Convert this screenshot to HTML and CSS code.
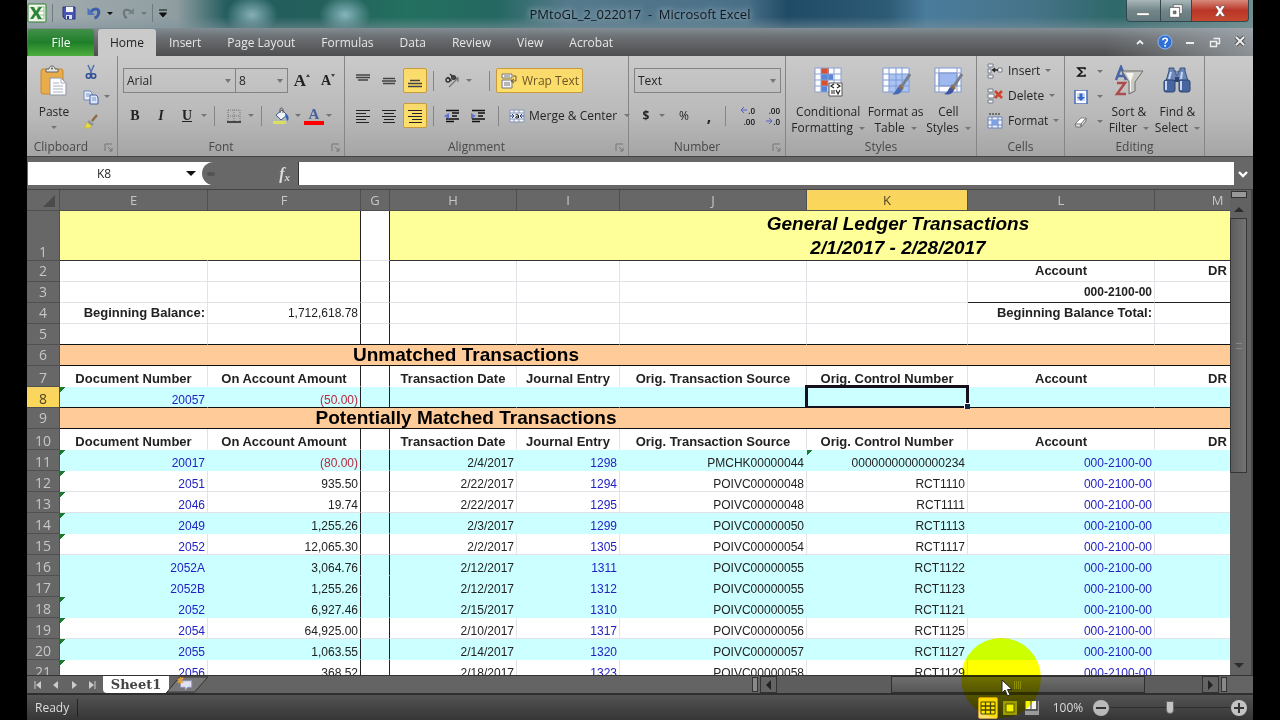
FILE: index.html
```
<!DOCTYPE html>
<html lang="en">
<head>
<meta charset="utf-8">
<title>PMtoGL_2_022017 - Microsoft Excel</title>
<link rel="stylesheet" href="styles.css">
</head>
<body>
<div class="window">
  <header class="titlebar">
    <div class="quick">
      <svg class="i20" viewBox="0 0 20 20"><rect x="1" y="1" width="18" height="18" rx="1" fill="#eef6ea" stroke="#2c7d32"/><rect x="11" y="4" width="6" height="12" fill="#fff" stroke="#8fbf8b"/><path d="M11 8h6M11 12h6" stroke="#8fbf8b"/><path d="M3 4h4l2 4 3-4h3l-4 6 4 6h-4l-2-4-3 4H3l4-6z" fill="#2d8434"/></svg>
      <span class="qsep"></span>
      <button aria-label="Save" class="save"><svg class="i16" viewBox="0 0 16 16"><path d="M2 2h12v12H4l-2-2z" fill="#4a55b5" stroke="#2b347e"/><path d="M5 2h7v5H5z" fill="#f3f5fb"/><path d="M5 10h6v4H5z" fill="#dfe3f4"/><path d="M6 11h2v3H6z" fill="#2b347e"/></svg></button>
      <button aria-label="Undo"><svg class="i16" viewBox="0 0 16 16"><path d="M5 6.500C9 2 14 4 12.500 9c-.5 2-2 3.500-4 4" fill="none" stroke="#3f5fa6" stroke-width="3"/><path d="M1.500 2.500V10H9z" fill="#4f74be"/></svg></button>
      <i class="caret dark"></i>
      <button aria-label="Redo" class="redo"><svg class="i16" viewBox="0 0 16 16"><path d="M11 6.500C7 3 3 5 4 9c.4 2 1 3.500 3 4" fill="none" stroke="#68757b" stroke-width="2"/><path d="M14 3v6H8z" fill="#74828a"/></svg></button>
      <i class="caret"></i>
      <span class="qsep"></span>
      <button aria-label="Customize"><svg class="i10" viewBox="0 0 10 10"><path d="M1 2h8M1.500 5h7L5 9z" stroke="#111" fill="#111"/></svg></button>
    </div>
    <h1>PMtoGL_2_022017 &nbsp;-&nbsp; Microsoft Excel</h1>
    <div class="winbtns">
      <button aria-label="Minimize"><svg viewBox="0 0 20 20"><path d="M3 12h14v3H3z" fill="#fff" stroke="#555" stroke-width=".6"/></svg></button>
      <button aria-label="Restore"><svg viewBox="0 0 20 20"><path d="M7 3h10v10h-3V6H7z" fill="#fff" stroke="#444" stroke-width=".7"/><path d="M3 6h11v11H3zM7 10v3h3v-3z" fill="#fff" fill-rule="evenodd" stroke="#444" stroke-width=".7"/></svg></button>
      <button class="close" aria-label="Close"><svg viewBox="0 0 20 20"><path d="M4 4h4l2 3 2-3h4l-4 6 4 6h-4l-2-3-2 3H4l4-6z" fill="#fff" stroke="#703030" stroke-width=".7"/></svg></button>
    </div>
  </header>

  <nav class="tabs">
    <button class="file">File</button>
    <button class="tab active">Home</button>
    <button class="tab">Insert</button>
    <button class="tab">Page Layout</button>
    <button class="tab">Formulas</button>
    <button class="tab">Data</button>
    <button class="tab">Review</button>
    <button class="tab">View</button>
    <button class="tab">Acrobat</button>
    <div class="tabtools">
      <button aria-label="Collapse ribbon"><svg class="i16" viewBox="0 0 16 16"><path d="M5 10l3-3 3 3" fill="none" stroke="#eee" stroke-width="1.800"/></svg></button>
      <button aria-label="Help"><svg class="i16" viewBox="0 0 16 16"><circle cx="8" cy="8" r="7" fill="#2f6fd6" stroke="#8fb7f0"/><path d="M5.800 6.200C6 3.500 10.500 3.600 10.300 6.200 10.200 7.600 8.200 7.800 8.100 9.600" fill="none" stroke="#fff" stroke-width="1.600"/><circle cx="8.100" cy="11.800" r="1" fill="#fff"/></svg></button>
      <button aria-label="Minimize workbook"><svg class="i16" viewBox="0 0 16 16"><path d="M4 8h8v2H4z" fill="#eee"/></svg></button>
      <button aria-label="Restore workbook"><svg class="i16" viewBox="0 0 16 16"><path d="M6.500 4.500h6v5H10M3.500 7.500h6v5h-6z" fill="none" stroke="#eee" stroke-width="1.400"/></svg></button>
      <button aria-label="Close workbook"><svg class="i16" viewBox="0 0 16 16"><path d="M4 3l8 8M12 3l-8 8" stroke="#555" stroke-width="4"/><path d="M4 3l8 8M12 3l-8 8" stroke="#eee" stroke-width="2"/></svg></button>
    </div>
  </nav>

  <section class="ribbon">
    <div class="group clipboard">
      <div class="body">
        <button class="big"><svg viewBox="0 0 30 32"><rect x="2" y="4" width="22" height="25" rx="2" fill="#e9ac4a" stroke="#c58a30"/><path d="M7 7V4h3c0-4 6-4 6 0h3v3z" fill="#e6e6e6" stroke="#666"/><circle cx="13" cy="3.500" r="1" fill="#555"/><path d="M11 13h11l5 5v12H11z" fill="#fdfdfd" stroke="#8d93a0"/><path d="M22 13v5h5M14 18h6M14 21h10M14 24h10M14 27h10" stroke="#a9b2c4" fill="none"/></svg><span>Paste</span><i class="caret"></i></button>
        <div class="stack">
          <button aria-label="Cut"><svg class="i16" viewBox="0 0 16 16"><path d="M5 1l4 9M11 1L7 10" stroke="#5471ae" stroke-width="1.500"/><circle cx="5.500" cy="12" r="2.200" fill="none" stroke="#2f4f97" stroke-width="1.600"/><circle cx="10.500" cy="12" r="2.200" fill="none" stroke="#2f4f97" stroke-width="1.600"/></svg></button>
          <button aria-label="Copy"><svg class="i16" viewBox="0 0 16 16"><path d="M1 2h6l2 2v7H1z" fill="#e9effb" stroke="#6d88bd"/><path d="M7 6h6l2 2v7H7z" fill="#dce6fa" stroke="#45639f"/><path d="M3 5h4M3 7h4M9 9h4M9 11h4" stroke="#7b93c5"/></svg><i class="caret"></i></button>
          <button aria-label="Format painter"><svg class="i16" viewBox="0 0 16 16"><path d="M14 1l-5 6" stroke="#8c6c48" stroke-width="2.500"/><path d="M6 6l5 4-2 2-5-3z" fill="#8b93a6"/><path d="M4 8l5 4c-2 2-5 3-8 1 2-1 2-3 3-5z" fill="#e6da45" stroke="#b9a733" stroke-width=".6"/></svg></button>
        </div>
      </div>
      <div class="label">Clipboard<svg class="launch" viewBox="0 0 9 9"><path d="M1 8V1h7M4 4l4 4M8 5v3H5" fill="none" stroke="#777"/></svg></div>
    </div>

    <div class="group font">
      <div class="rows">
        <div class="row">
          <select class="fname" aria-label="Font"><option>Arial</option></select><select class="fsize" aria-label="Font size"><option>8</option></select>
          <button class="tb serif lg grow" aria-label="Increase font size">A<i class="mark up"></i></button>
          <button class="tb serif" aria-label="Decrease font size">A<i class="mark"></i></button>
        </div>
        <div class="row">
          <button class="tb serif"><b>B</b></button><button class="tb serif"><em>I</em></button><button class="tb serif"><u>U</u></button><i class="caret"></i>
          <span class="sep"></span>
          <button class="tb" aria-label="Borders"><svg class="i16" viewBox="0 0 16 16"><path d="M2 2h12M2 8h12M2 2v12M8 2v12M14 2v12" stroke="#777" stroke-dasharray="1 1"/><path d="M1 14h14" stroke="#222" stroke-width="1.500"/></svg></button><i class="caret"></i>
          <span class="sep"></span>
          <button class="tb" aria-label="Fill color"><svg class="i18" viewBox="0 0 18 18"><path d="M4 8l6-5 5 5-6 5z" fill="#eef3fb" stroke="#405b8c"/><path d="M8 6V2.500c0-2 3-2 3 0V6" fill="none" stroke="#555"/><path d="M13 7c4 0 4 4 3 7-2-1-2-4-3-7z" fill="#2f65b8"/><path d="M1 14h13v3H1z" fill="#d9e05c"/></svg></button><i class="caret"></i>
          <button class="tb fontcolor" aria-label="Font color">A</button><i class="caret"></i>
        </div>
      </div>
      <div class="label">Font<svg class="launch" viewBox="0 0 9 9"><path d="M1 8V1h7M4 4l4 4M8 5v3H5" fill="none" stroke="#777"/></svg></div>
    </div>

    <div class="group align">
      <div class="rows">
        <div class="row">
          <button class="tb" aria-label="Top align"><svg class="i16" viewBox="0 0 16 16"><path d="M1 2h14M1 4.500h14M3 7h10" stroke="#444" stroke-width="1.500"/></svg></button>
          <button class="tb" aria-label="Middle align"><svg class="i16" viewBox="0 0 16 16"><path d="M2 5.500h12M1 8h14M2 10.500h12" stroke="#444" stroke-width="1.500"/></svg></button>
          <button class="tb on" aria-label="Bottom align"><svg class="i16" viewBox="0 0 16 16"><path d="M3 7.500h10M1 10.500h14M1 13.500h14" stroke="#444" stroke-width="1.300"/></svg></button>
          <span class="sep"></span>
          <button class="tb" aria-label="Orientation"><svg class="i16" viewBox="0 0 16 16"><path d="M5 14L14 5M14 9V5h-4" fill="none" stroke="#777" stroke-width="1.300"/><g fill="none" stroke="#333" stroke-width="1.400"><circle cx="4" cy="7" r="2"/><path d="M3.500 4l4 4M6 1l5 5"/><circle cx="9.500" cy="4.500" r="1.800"/></g></svg></button><i class="caret"></i>
          <span class="fill"></span><span class="sep"></span>
          <button class="wide on"><svg class="i18" viewBox="0 0 18 18"><path d="M2 2h10v4H2zM2 8h10v8H2z" fill="#f5f5f5" stroke="#777"/><path d="M4 4h6M4 11h6M4 13h6" stroke="#777"/><path d="M13 4h3v5h-4M14 7l-3 2 3 2" stroke="#6e5a35" fill="none"/></svg>Wrap Text</button>
        </div>
        <div class="row">
          <button class="tb" aria-label="Align left"><svg class="i16" viewBox="0 0 16 16"><path d="M1 2.500h14M1 5.500h10M1 8.500h14M1 11.500h10M1 14.500h13" stroke="#222"/></svg></button>
          <button class="tb" aria-label="Center"><svg class="i16" viewBox="0 0 16 16"><path d="M1 2.500h14M3 5.500h10M1 8.500h14M3 11.500h10M2 14.500h12" stroke="#222"/></svg></button>
          <button class="tb on" aria-label="Align right"><svg class="i16" viewBox="0 0 16 16"><path d="M1 2.500h14M5 5.500h10M1 8.500h14M5 11.500h10M2 14.500h13" stroke="#222"/></svg></button>
          <span class="sep"></span>
          <button class="tb" aria-label="Decrease indent"><svg class="i16" viewBox="0 0 16 16"><path d="M2 2.500h13M8 5h7M8 8h5M2 11h13M2 13.500h8" stroke="#111" stroke-width="1.500"/><path d="M5 5v6L0 8z" fill="#6273c9"/></svg></button>
          <button class="tb" aria-label="Increase indent"><svg class="i16" viewBox="0 0 16 16"><path d="M2 2.500h13M8 5h7M8 8h5M2 11h13M2 13.500h8" stroke="#111" stroke-width="1.500"/><path d="M1 5v6l5-3z" fill="#6273c9"/></svg></button>
          <span class="fill"></span><span class="sep"></span>
          <button class="wide merge"><svg class="i16" viewBox="0 0 16 16"><path d="M1 2h14v12H1z" fill="#f4f7fc" stroke="#8796b5"/><path d="M5 2v3M10 2v3M5 11v3M10 11v3M1 5h14M1 11h14" stroke="#8796b5"/><path d="M1 8h4M11 8h4M3 6l2 2-2 2M13 6l-2 2 2 2" stroke="#26468c" fill="none"/><path d="M6.500 7c1-1 3-1 3 1v2M9.500 8c-3 0-4 2-1.500 2 1 0 1.500-1 1.500-1" stroke="#111" fill="none"/></svg>Merge &amp; Center<i class="caret"></i></button>
        </div>
      </div>
      <div class="label">Alignment<svg class="launch" viewBox="0 0 9 9"><path d="M1 8V1h7M4 4l4 4M8 5v3H5" fill="none" stroke="#777"/></svg></div>
    </div>

    <div class="group number">
      <div class="rows">
        <div class="row"><select class="nfmt" aria-label="Number format"><option>Text</option></select></div>
        <div class="row">
          <button class="tb"><b>$</b></button><i class="caret"></i><button class="tb pct">%</button><button class="tb comma"><b>,</b></button>
          <span class="sep"></span>
          <button class="tb dec" aria-label="Increase decimal"><span><svg viewBox="0 0 6 6"><path d="M0 3h6M3 0L0 3l3 3" fill="none" stroke="#5561c9"/></svg>.0</span><span>.00</span></button>
          <button class="tb dec" aria-label="Decrease decimal"><span>.00</span><span><svg viewBox="0 0 6 6"><path d="M0 3h6M3 0l3 3-3 3" fill="none" stroke="#5561c9"/></svg>.0</span></button>
        </div>
      </div>
      <div class="label">Number<svg class="launch" viewBox="0 0 9 9"><path d="M1 8V1h7M4 4l4 4M8 5v3H5" fill="none" stroke="#777"/></svg></div>
    </div>

    <div class="group styles">
      <div class="body">
        <button class="big"><svg viewBox="0 0 30 32"><path d="M2 3h26v24H2z" fill="#fbfcff"/><path d="M8 3h8v6H8zM8 15h7v6H8z" fill="#d9502f"/><path d="M8 9h12v6H8zM8 21h6v6H8z" fill="#5a86d8"/><path d="M2 3h26v24H2zM8 3v24M15 3v24M21 3v24M2 9h26M2 15h26M2 21h26" fill="none" stroke="#8ba0d0"/><path d="M16 18h13v13H16z" fill="#fff" stroke="#555"/><path d="M21 19l-3 2 3 2M24 19l3 2-3 2M18 26h4M18 28h4M23 25l2 4 2-4" fill="none" stroke="#222" stroke-width="1.200"/></svg><span>Conditional<br>Formatting<i class="caret"></i></span></button>
        <button class="big"><svg viewBox="0 0 30 32"><path d="M2 3h26v24H2z" fill="#fbfcff"/><path d="M8 9h20v18H8z" fill="#a9c3f3"/><path d="M2 3h26v24H2zM8 3v24M15 3v24M21 3v24M2 9h26M2 15h26M2 21h26" fill="none" stroke="#7f9ad6"/><path d="M29 9L21 21" stroke="#777f8c" stroke-width="3"/><path d="M19 19l4 4-3 3-3-3z" fill="#8d6b4a"/><path d="M17 22l4 3c-2 5-6 5-10 4 3-1 4-4 6-7z" fill="#4769b4"/></svg><span>Format as<br>Table<i class="caret"></i></span></button>
        <button class="big"><svg viewBox="0 0 30 32"><path d="M2 3h26v24H2z" fill="#fbfcff" stroke="#7f9ad6"/><path d="M6 8h18v13H6z" fill="#9db9f0" stroke="#6f8cc9"/><path d="M6 3v24M24 3v24M2 8h26M2 21h26" stroke="#8ba0d0"/><path d="M29 9L21 21" stroke="#777f8c" stroke-width="3"/><path d="M19 19l4 4-3 3-3-3z" fill="#8d6b4a"/><path d="M17 22l4 3c-2 5-6 5-10 4 3-1 4-4 6-7z" fill="#4056a4"/></svg><span>Cell<br>Styles<i class="caret"></i></span></button>
      </div>
      <div class="label">Styles</div>
    </div>

    <div class="group cells">
      <div class="stack">
        <button><svg class="i16" viewBox="0 0 16 16"><path d="M1 1h5v3H1zM1 6h3v4H1zM1 12h5v3H1zM11 5h4v4h-4z" fill="#f5f7fb" stroke="#777d8a"/><path d="M5 7h6M8 5L6 7l2 2" fill="none" stroke="#222" stroke-width="1.300"/></svg>Insert<i class="caret"></i></button>
        <button><svg class="i16" viewBox="0 0 16 16"><path d="M1 1h5v3H1zM1 6h6v4H1zM1 12h5v3H1z" fill="#f5f7fb" stroke="#777d8a"/><path d="M8 3l7 7M15 3l-7 7" stroke="#d0442c" stroke-width="2.600"/></svg>Delete<i class="caret"></i></button>
        <button><svg class="i16" viewBox="0 0 16 16"><path d="M2 1h12" stroke="#222" stroke-dasharray="2 1"/><path d="M1 4h14v11H1z" fill="#eef3fd" stroke="#6c85bd"/><path d="M5 4v11M11 4v11M1 7h14M1 12h14" stroke="#6c85bd"/><path d="M5 7h6v5H5z" fill="#7fa0e2"/></svg>Format<i class="caret"></i></button>
      </div>
      <div class="label">Cells</div>
    </div>

    <div class="group editing">
      <div class="body">
        <div class="stack">
          <button aria-label="Sum"><svg class="i14" viewBox="0 0 14 14"><path d="M11 4.500V3H4l4 4-4 4h7V9.500" fill="none" stroke="#111" stroke-width="1.600"/></svg><i class="caret"></i></button>
          <button aria-label="Fill"><svg class="i14" viewBox="0 0 14 14"><path d="M1 0h12v14H1z" fill="#fff" stroke="#4a6cb5" stroke-width="1.500"/><path d="M3 3h8v8H3z" fill="#c9d9f8"/><path d="M5.500 3.500h3V7H11l-4 4-4-4h2.500z" fill="#3767c4"/></svg><i class="caret"></i></button>
          <button aria-label="Clear"><svg class="i14" viewBox="0 0 14 14"><path d="M1 9l6-6h5L7 10z" fill="#fff" stroke="#888"/><path d="M1 9h6v3H2zM7 9l5-6v3l-5 6z" fill="#dde0e6" stroke="#777"/></svg><i class="caret"></i></button>
        </div>
        <button class="big"><svg viewBox="0 0 30 32"><path d="M2 15L7 2l5 13M4 11h6" fill="none" stroke="#4a64a8" stroke-width="2.500"/><path d="M3 18h8L3 29h9" fill="none" stroke="#ad4c4c" stroke-width="2.500"/><path d="M8 6h21l-8 11v9l-6 3V17z" fill="#c9c9c4" stroke="#6d6d6a"/><path d="M12 8h8l-3 8v10l-1 1V16z" fill="#f4f4f0"/></svg><span>Sort &amp;<br>Filter<i class="caret"></i></span></button>
        <button class="big"><svg viewBox="0 0 30 32"><path d="M7 6V3h5v3h2v4h2V6h2V3h5v3l3 10H4z" fill="#6c86ba" stroke="#37507f"/><rect x="2" y="15" width="11" height="12" rx="2" fill="#47659f" stroke="#2c4475"/><rect x="17" y="15" width="11" height="12" rx="2" fill="#47659f" stroke="#2c4475"/><path d="M4 16v9M19 16v9M9 7L7 14M20 7l-1 7" stroke="#c8d7f3" stroke-width="2"/><path d="M13 12h4v5h-4z" fill="#2f456f"/></svg><span>Find &amp;<br>Select<i class="caret"></i></span></button>
      </div>
      <div class="label">Editing</div>
    </div>
  </section>

  <section class="formula">
    <div class="namebox"><input aria-label="Name box" value="K8"><button aria-label="Names"><i class="caret dark"></i></button></div>
    <div class="fx"><i class="knob"></i><button aria-label="Insert function"><em>f<sub>x</sub></em></button></div>
    <input class="finput" aria-label="Formula bar">
    <button class="expand" aria-label="Expand formula bar"><svg class="i14" viewBox="0 0 14 14"><path d="M3 5l4 4 4-4" fill="none" stroke="#fff" stroke-width="2.400"/></svg></button>
  </section>

  <main class="sheet">
    <div class="view">
      <table>
        <colgroup><col class="cn"><col class="ce"><col class="cf"><col class="cg"><col class="ch"><col class="ci"><col class="cj"><col class="ck"><col class="cl"><col class="cm"><col class="cm"></colgroup>
        <thead><tr><th><i class="corner"></i></th><th>E</th><th>F</th><th>G</th><th>H</th><th>I</th><th>J</th><th class="sel">K</th><th>L</th><th>M</th><th></th></tr></thead>
        <tbody>
          <tr class="r1"><th>1</th><td class="y"></td><td class="y"></td><td></td><td class="y title" colspan="7">General Ledger Transactions<br>2/1/2017 - 2/28/2017</td></tr>
          <tr class="top"><th>2</th><td></td><td></td><td></td><td></td><td></td><td></td><td></td><td class="h">Account</td><td class="h">DR</td><td></td></tr>
          <tr class="top under"><th>3</th><td></td><td></td><td></td><td></td><td></td><td></td><td></td><td><b>000-2100-00</b></td><td></td><td></td></tr>
          <tr class="top"><th>4</th><td class="h r">Beginning Balance:</td><td>1,712,618.78</td><td></td><td></td><td></td><td></td><td></td><td class="h r">Beginning Balance Total:</td><td></td><td></td></tr>
          <tr class="top end"><th>5</th><td></td><td></td><td></td><td></td><td></td><td></td><td></td><td></td><td></td><td></td></tr>
          <tr class="band"><th>6</th><td colspan="10"><div>Unmatched Transactions</div></td></tr>
          <tr class="heads"><th>7</th><td>Document Number</td><td>On Account Amount</td><td></td><td>Transaction Date</td><td>Journal Entry</td><td>Orig. Transaction Source</td><td>Orig. Control Number</td><td>Account</td><td>DR</td><td></td></tr>
          <tr class="c end"><th class="sel">8</th><td class="n t">20057</td><td class="neg">(50.00)</td><td></td><td></td><td></td><td></td><td class="cur"><i class="cursor"></i></td><td></td><td></td><td></td></tr>
          <tr class="band"><th>9</th><td colspan="10"><div>Potentially Matched Transactions</div></td></tr>
          <tr class="heads"><th>10</th><td>Document Number</td><td>On Account Amount</td><td></td><td>Transaction Date</td><td>Journal Entry</td><td>Orig. Transaction Source</td><td>Orig. Control Number</td><td>Account</td><td>DR</td><td></td></tr>
          <tr class="c"><th>11</th><td class="n t">20017</td><td class="neg">(80.00)</td><td></td><td>2/4/2017</td><td class="n">1298</td><td>PMCHK00000044</td><td class="t">00000000000000234</td><td class="n">000-2100-00</td><td></td><td></td></tr>
          <tr><th>12</th><td class="n t">2051</td><td>935.50</td><td></td><td>2/22/2017</td><td class="n">1294</td><td>POIVC00000048</td><td>RCT1110</td><td class="n">000-2100-00</td><td></td><td></td></tr>
          <tr><th>13</th><td class="n t">2046</td><td>19.74</td><td></td><td>2/22/2017</td><td class="n">1295</td><td>POIVC00000048</td><td>RCT1111</td><td class="n">000-2100-00</td><td></td><td></td></tr>
          <tr class="c"><th>14</th><td class="n t">2049</td><td>1,255.26</td><td></td><td>2/3/2017</td><td class="n">1299</td><td>POIVC00000050</td><td>RCT1113</td><td class="n">000-2100-00</td><td></td><td></td></tr>
          <tr><th>15</th><td class="n t">2052</td><td>12,065.30</td><td></td><td>2/2/2017</td><td class="n">1305</td><td>POIVC00000054</td><td>RCT1117</td><td class="n">000-2100-00</td><td></td><td></td></tr>
          <tr class="c"><th>16</th><td class="n">2052A</td><td>3,064.76</td><td></td><td>2/12/2017</td><td class="n">1311</td><td>POIVC00000055</td><td>RCT1122</td><td class="n">000-2100-00</td><td></td><td></td></tr>
          <tr class="c"><th>17</th><td class="n">2052B</td><td>1,255.26</td><td></td><td>2/12/2017</td><td class="n">1312</td><td>POIVC00000055</td><td>RCT1123</td><td class="n">000-2100-00</td><td></td><td></td></tr>
          <tr class="c"><th>18</th><td class="n t">2052</td><td>6,927.46</td><td></td><td>2/15/2017</td><td class="n">1310</td><td>POIVC00000055</td><td>RCT1121</td><td class="n">000-2100-00</td><td></td><td></td></tr>
          <tr><th>19</th><td class="n t">2054</td><td>64,925.00</td><td></td><td>2/10/2017</td><td class="n">1317</td><td>POIVC00000056</td><td>RCT1125</td><td class="n">000-2100-00</td><td></td><td></td></tr>
          <tr class="c"><th>20</th><td class="n t">2055</td><td>1,063.55</td><td></td><td>2/14/2017</td><td class="n">1320</td><td>POIVC00000057</td><td>RCT1127</td><td class="n">000-2100-00</td><td></td><td></td></tr>
          <tr><th>21</th><td class="n t">2056</td><td>368.52</td><td></td><td>2/18/2017</td><td class="n">1323</td><td>POIVC00000058</td><td>RCT1129</td><td class="n">000-2100-00</td><td></td><td></td></tr>
        </tbody>
      </table>
    </div>
    <div class="vscroll">
      <i class="vsplit"></i>
      <i class="tri up"></i>
      <div class="vthumb"><i class="vgrip"></i></div>
      <span class="vtrack"></span>
      <i class="tri down"></i>
    </div>
  </main>

  <div class="bottom">
    <div class="navs">
      <button aria-label="First sheet"><svg class="i10" viewBox="0 0 10 10"><path d="M2 1v8" stroke="#ccc"/><path d="M8 1v8L3 5z" fill="#ccc"/></svg></button>
      <button aria-label="Previous sheet"><svg class="i10" viewBox="0 0 10 10"><path d="M7 1v8L2 5z" fill="#ccc"/></svg></button>
      <button aria-label="Next sheet"><svg class="i10" viewBox="0 0 10 10"><path d="M3 1v8l5-4z" fill="#ccc"/></svg></button>
      <button aria-label="Last sheet"><svg class="i10" viewBox="0 0 10 10"><path d="M8 1v8" stroke="#ccc"/><path d="M2 1v8l5-4z" fill="#ccc"/></svg></button>
    </div>
    <button class="sheettab">Sheet1</button>
    <button class="newtab" aria-label="Insert sheet"><svg viewBox="0 0 46 18"><path d="M0 18L14 1h30L30 17H2z" fill="#777" stroke="#2f2f2f"/><path d="M15 5h12v7h-4l-3 3v-3h-5z" fill="#dfe2f2" stroke="#8c93b5"/><path d="M12 3l6 4M18 2l-6 5M15 1v7" stroke="#e7a33a" stroke-width="1.500"/></svg></button>
    <span class="fill"></span>
    <div class="hscroll">
      <i class="hsplit"></i>
      <button aria-label="Scroll left"><i class="tri left"></i></button>
      <span class="htrack before"></span>
      <div class="hthumb"><i class="hgrip"></i></div>
      <span class="htrack after"></span>
      <button aria-label="Scroll right"><i class="tri right"></i></button>
      <i class="hsplit"></i>
    </div>
  </div>

  <footer class="status">
    <span class="ready">Ready</span>
    <span class="fill"></span>
    <div class="views">
      <button class="on" aria-label="Normal"><svg class="i16" viewBox="0 0 16 16"><path d="M1 2h14v12H1z" fill="#ffe98a" stroke="#4b4620"/><path d="M1 6h14M1 10h14M5.500 2v12M10.500 2v12" stroke="#4b4620" stroke-width="1.300"/></svg></button>
      <button aria-label="Page layout"><svg class="i16" viewBox="0 0 16 16"><path d="M1 1h14v14H1z" fill="#9b9b9b"/><path d="M4 4h8v8H4z" fill="#f2f2f2" stroke="#555"/></svg></button>
      <button aria-label="Page break"><svg class="i16" viewBox="0 0 16 16"><path d="M1 1h14v14H1z" fill="#9b9b9b"/><path d="M2 1h4v8H2zM8 1h4v8H8z" fill="#f6f6f6"/><path d="M1 10h12V1" fill="none" stroke="#444" stroke-width="1.500"/></svg></button>
    </div>
    <button class="pct100">100%</button>
    <button class="round" aria-label="Zoom out"><svg class="i18" viewBox="0 0 18 18"><circle cx="9" cy="9" r="8" fill="#b9b9b9"/><path d="M4 9h10" stroke="#333" stroke-width="2"/></svg></button>
    <input type="range" class="zoom" aria-label="Zoom" min="0" max="100" value="50">
    <button class="round" aria-label="Zoom in"><svg class="i18" viewBox="0 0 18 18"><circle cx="9" cy="9" r="8" fill="#c3c3c3"/><path d="M4 9h10M9 4v10" stroke="#333" stroke-width="2"/></svg></button>
  </footer>
  <div class="halo"></div>
  <svg class="pointer" viewBox="0 0 12 18"><path d="M1 1v13l3-3 2.500 6 2.500-1-2.500-5.500H11z" fill="#fff" stroke="#222"/></svg>
</div>
</body>
</html>
```
FILE: styles.css
```
* { box-sizing: border-box; }
body {
  margin: 0;
  background: #000;
  font: 12px/16px "Open Sans", "Noto Sans", sans-serif;
  color: #262626;
}
button, input, select { font: inherit; color: inherit; }
button {
  display: flex;
  align-items: center;
  justify-content: center;
  padding: 0;
  border: 0;
  background: none;
}
svg { display: block; flex: none; }
.i10 { width: 10px; height: 10px; }
.i14 { width: 14px; height: 14px; }
.i16 { width: 16px; height: 16px; }
.i18 { width: 18px; height: 18px; }
.i20 { width: 20px; height: 20px; }
.fill { flex: 1; }
.caret {
  display: inline-block;
  flex: none;
  border: 3px solid transparent;
  border-top-color: #747474;
  border-bottom: 0;
}
.caret.dark { border-top-color: #111; }

.window {
  position: relative;
  display: flex;
  flex-direction: column;
  height: 100vh;
  margin: 0 27px;
  background: #676767;
  overflow: hidden;
}

/* Title bar */
.titlebar {
  display: flex;
  justify-content: space-between;
  height: 28px;
  flex: none;
  background:
    linear-gradient(#0000 60%, #7c929a88),
    radial-gradient(ellipse 26px 20px at 225px 15px, #86b0b6, #86b0b600),
    radial-gradient(ellipse 26px 20px at 318px 15px, #86b5bd, #86b5bd00),
    linear-gradient(90deg, #a4adb0 0, #8f9da1 150px, #235c5e 200px, #24605c 300px, #23705f 380px, #256862 470px, #55798c 540px, #496f88 720px, #204b66 760px, #2d5a74 860px, #4a7c9c 900px, #47748a 1000px, #2e6869 1090px, #6f8e8e 100%);
}
.quick { display: flex; align-items: center; width: 200px; gap: 5px; padding-bottom: 2px; }
.qsep { width: 1px; height: 18px; background: #6d7a7e; }
.save { margin: 0 4px 0 3px; }
.redo { margin-left: 2px; }
.titlebar h1 {
  margin: 0;
  font-size: 13px;
  font-weight: 400;
  line-height: 28px;
  color: #101820;
  text-shadow: 0 0 6px #a9bcc4, 0 0 10px #9ab0ba;
}
.winbtns {
  display: flex;
  height: 22px;
  width: 200px;
  justify-content: flex-end;
  padding-right: 4px;
}
.winbtns button {
  width: 35px;
  border: 1px solid #33474e;
  border-top: 0;
  background: linear-gradient(#a9b7b9, #73868a 50%, #64797d);
}
.winbtns button + button { width: 31px; border-left: 0; }
.winbtns button:first-child { border-radius: 0 0 0 4px; }
.winbtns .close.close {
  width: 57px;
  border-radius: 0 0 4px 0;
  background: linear-gradient(#d98a7c, #b93527 50%, #c6492f);
}
.winbtns svg { width: 18px; height: 18px; }

/* Ribbon tabs */
.tabs {
  display: flex;
  height: 28px;
  flex: none;
  background: linear-gradient(90deg, #0000 88%, #aab2b8aa), linear-gradient(#828d93, #6b6e72 35%, #4e4e4e);
  color: #e6e6e6;
}
.file {
  width: 66px;
  margin: 1px 4px 0 1px;
  border-radius: 3px 3px 0 0;
  background: linear-gradient(#43904a, #1f7f2a 50%, #4fae3c);
  color: #fff;
}
.tab { padding: 1px 13px 0; }
.tab.active {
  margin-top: 1px;
  padding: 0 12px;
  border-radius: 3px 3px 0 0;
  background: #cacaca;
  color: #222;
}
.tabtools { display: flex; flex: 1; justify-content: flex-end; gap: 9px; padding-right: 5px; }

/* Ribbon */
.ribbon {
  display: flex;
  height: 101px;
  flex: none;
  background: linear-gradient(#cacaca, #b9b9b9 60%, #a5a5a5);
  border-bottom: 1px solid #444;
}
.group {
  display: flex;
  flex-direction: column;
  justify-content: space-between;
  border-right: 1px solid #858585;
  padding: 0 4px;
}
.clipboard { width: 91px; }
.font { width: 227px; }
.align { width: 284px; }
.number { width: 157px; }
.styles { width: 191px; }
.cells { width: 88px; }
.editing { width: 140px; }
.label {
  position: relative;
  height: 17px;
  text-align: center;
  color: #484848;
}
.clipboard .label { padding-right: 22px; }
.font .label, .align .label, .number .label { padding-right: 20px; }
.launch { position: absolute; right: 0; bottom: 4px; width: 9px; height: 9px; }
.body { display: flex; padding-top: 3px; justify-content: space-between; }
.body .stack { padding-top: 0; }
.big { flex-direction: column; justify-content: flex-start; padding-top: 6px; white-space: nowrap; }
.big svg { width: 30px; height: 32px; margin-bottom: 7px; }
.big .caret { margin: 6px 0 0; }
.big span .caret { margin: 0 0 2px 6px; }
.clipboard .big { width: 46px; }
.clipboard .stack { width: 30px; }
.styles .body { justify-content: space-around; }
.stack { display: flex; flex-direction: column; }
.stack button { height: 25px; gap: 5px; justify-content: flex-start; }
.cells .stack { padding: 2px 0 0 6px; }
.editing .stack { padding-left: 5px; }
.editing .stack .caret { margin-left: 4px; }
.rows { display: flex; flex-direction: column; gap: 10px; padding-top: 12px; }
.row { display: flex; align-items: center; height: 25px; gap: 2px; }
.tb { width: 24px; height: 25px; flex: none; }
.sep { width: 1px; height: 20px; flex: none; margin: 0 4px; background: #858585; }
.on { background: linear-gradient(#fbd96d, #fce06a); border: 1px solid #c79a3c; border-radius: 2px; }
select {
  height: 25px;
  appearance: none;
  border: 1px solid #838383;
  border-radius: 0;
  padding: 0 3px;
  background: url("data:image/svg+xml,%3Csvg xmlns='http://www.w3.org/2000/svg' width='6' height='4'%3E%3Cpath d='M0 0h6L3 4z' fill='%23747474'/%3E%3C/svg%3E") no-repeat right 4px center;
}
.fname { width: 115px; }
.fsize { width: 54px; margin-left: -3px; }
.nfmt { width: 149px; }
.serif { font-family: "Liberation Serif", serif; font-size: 14px; font-weight: 700; gap: 0; color: #222; }
.serif.lg { font-size: 17px; }
.mark { align-self: flex-start; margin-top: 6px; border: 2px solid transparent; border-top: 3px solid #444; border-bottom: 0; }
.mark.up { border-top: 0; border-bottom: 3px solid #444; }
.font .rows { padding-left: 1px; }
.font .row { gap: 2px; }
.font .row .sep { margin: 0 5px; }
.fontcolor {
  height: 18px;
  width: 20px;
  margin-left: 1px;
  border-bottom: 4px solid #f00;
  font: 700 15px/14px "Liberation Serif", serif;
  color: #46609c;
}
.wide { height: 25px; gap: 5px; flex: none; padding: 0 3px; white-space: nowrap; }
.wide.on { color: #6b5626; }
.align .row { padding-left: 2px; }
.align .row .wide.on { gap: 4px; margin-right: 41px; }
.align .row .merge { width: 128px; justify-content: flex-start; gap: 4px; padding-left: 4px; }
.merge .caret { margin-left: 3px; }
.number .rows { padding-left: 1px; }
.number .row { gap: 1px; }
.number .pct { margin-left: 6px; }
.number .row .sep { margin: 0 4px 0 3px; }
.comma { font-size: 16px; }
.dec { flex-direction: column; font-size: 8px; line-height: 11px; align-items: flex-end; color: #111; font-weight: 600; }
.dec span { display: flex; align-items: center; gap: 1px; }
.dec svg { width: 6px; height: 6px; }

/* Formula bar */
.formula { display: flex; height: 33px; flex: none; padding: 5px 1px 4px; border-bottom: 1px solid #444; }
.namebox { display: flex; width: 186px; background: #fff; }
.namebox input { width: 152px; min-width: 0; border: 0; background: none; text-align: center; outline: 0; }
.namebox button { width: 22px; }
.namebox .caret { border-width: 5px 5px 0; }
.fx {
  display: flex;
  align-items: center;
  justify-content: space-between;
  width: 96px;
  margin-left: -12px;
  padding: 0 8px 0 5px;
  border-radius: 12px 0 0 12px;
  background: #686868;
  color: #ddd;
}
.fx button { font: 700 16px/20px "Liberation Serif", serif; }
.fx sub { font-size: 11px; line-height: 1px; vertical-align: -2px; }
.knob { width: 8px; height: 4px; border-radius: 2px; background: #545454; }
.finput { flex: 1; min-width: 0; border: 0; border-left: 1px solid #333; background: #fff; padding: 0 4px; outline: 0; }
.expand { width: 18px; }

/* Worksheet */
.sheet { display: flex; flex: 1; min-height: 0; }
.view { flex: 1; min-width: 0; overflow: hidden; background: #fff; }
table { width: 1379px; table-layout: fixed; border-collapse: separate; border-spacing: 0; }
.cn { width: 33px; }
.ce { width: 148px; }
.cf { width: 153px; }
.cg { width: 29px; }
.ch { width: 127px; }
.ci { width: 103px; }
.cj { width: 187px; }
.ck { width: 161px; }
.cl { width: 187px; }
.cm { width: 126px; }
th {
  height: 21px;
  padding: 0;
  border: solid #505050;
  border-width: 0 1px 1px 0;
  background: #676767;
  color: #c6c6c6;
  font-weight: 400;
  font-size: 14px;
  line-height: 16px;
  vertical-align: bottom;
}
.top th, .band th { vertical-align: middle; }
thead th { height: 21px; font-size: 13px; line-height: 20px; }
th.sel { background: linear-gradient(#f9d462, #fbd858); color: #4d4326; }
.corner { display: block; width: 0; margin: 0 4px 3px auto; border: solid transparent; border-width: 0 0 12px 12px; border-bottom-color: #4b4b4b; }
td {
  height: 21px;
  padding: 6px 2px 0;
  border: solid #e2e2e8;
  border-width: 0 1px 1px 0;
  font: 12px/14px "Liberation Sans", Arial, sans-serif;
  text-align: right;
  white-space: nowrap;
  color: #222;
  overflow: hidden;
}
td:nth-child(3), td:nth-child(4) { border-right-color: #222; }
.top td { padding-top: 0; line-height: 18px; }
.r1 td { height: 50px; border-bottom-color: #333; }
.r1 td:nth-child(4) { border-bottom-color: #e2e2e8; }
.r1 .y { background: #ffff99; }
.r1 .y:nth-child(2) { border-right-color: #ffff99; }
.r1 .title { padding: 0; text-align: center; font: italic 700 19px/24px "Liberation Sans", Arial, sans-serif; color: #000; }
.top .h, .heads td { font-size: 13px; font-weight: 700; text-align: center; }
.top .h.r { text-align: right; }
.under td:nth-child(n+9) { border-bottom-color: #222; }
.end td { border-bottom-color: #111; }
.band td { padding: 0; border-bottom-color: #111; background: #ffcc99; }
.band div { width: 812px; text-align: center; font: 700 19px/18px "Liberation Sans", Arial, sans-serif; color: #000; }
.heads td { border-bottom-color: #fff; }
.c td { background: #ccffff; }
.c td:not(:nth-child(3)):not(:nth-child(4)) { border-right-color: #ccffff; }
.c:not(.end) td { border-bottom-color: #ccffff; }
td.n { color: #2222c4; }
td.neg { color: #b8283c; }
td.t { background-image: linear-gradient(135deg, #1c7a2c 4px, #0000 4px); }
td.cur { position: relative; overflow: visible; }
.cursor { position: absolute; inset: -2px -2px -1px -2px; border: 3px solid #15101c; border-bottom-width: 2px; }
.cursor::after { content: ""; position: absolute; right: -4px; bottom: -3px; width: 5px; height: 5px; background: #15254a; border: solid #fff; border-width: 1px 0 0 1px; }

.vscroll {
  display: flex;
  flex-direction: column;
  align-items: center;
  width: 23px;
  padding: 1px 4px 7px 0;
  border-right: 2px solid #484848;
  background: #626262;
}
.vsplit { width: 16px; height: 7px; border: 1px solid #333; background: #999; }
.tri { width: 0; border: 5px solid transparent; }
.tri.up { border-top: 0; border-bottom-color: #2c2c2c; margin: 9px 0 6px; }
.tri.down { border-bottom: 0; border-top-color: #2c2c2c; }
.vthumb { flex: 254; display: flex; align-items: center; justify-content: center; width: 17px; border: 1px solid #363636; background: linear-gradient(90deg, #5c5c5c, #737373); }
.vgrip { width: 6px; height: 6px; border: solid #888; border-width: 1px 0; }
.vtrack { flex: 190; }

/* Sheet tabs and horizontal scrolling */
.bottom { display: flex; height: 18px; flex: none; border-top: 1px solid #333; background: #646464; }
.navs { display: flex; width: 76px; justify-content: space-around; padding: 0 2px; }
.sheettab { width: 66px; background: #fff; font: 700 13px/16px "DejaVu Serif", serif; color: #444; border-radius: 0 0 4px 4px; }
.newtab { margin-left: -4px; }
.newtab svg { width: 46px; height: 17px; }
.hscroll { display: flex; align-items: stretch; width: 503px; padding-right: 24px; }
.hscroll button { width: 17px; border: 1px solid #333; flex: none; }
.hsplit { width: 6px; margin: 1px 2px; border: 1px solid #333; background: #888; flex: none; }
.htrack { background: #5d5d5d; }
.before { flex: 114; }
.after { flex: 57; }
.hthumb { flex: 253; display: flex; align-items: center; justify-content: center; border: 1px solid #2f2f2f; background: linear-gradient(#6e6e6e, #565656); }
.hgrip { width: 7px; height: 8px; background: repeating-linear-gradient(90deg, #8d8d8d 0 1px, #0000 1px 2px); }
.tri.left { border-left: 0; border-right-color: #222; }
.tri.right { border-right: 0; border-left-color: #222; }

/* Status bar */
.status {
  display: flex;
  align-items: center;
  height: 27px;
  flex: none;
  padding: 0 5px 0 8px;
  border-top: 2px solid #2f2f2f;
  background: linear-gradient(#535353, #363636);
  color: #ddd;
}
.ready { padding-right: 8px; border-right: 1px solid #222; line-height: 18px; }
.views { display: flex; gap: 2px; }
.views button { width: 20px; height: 22px; }
.pct100 { width: 46px; margin: 0 1px 0 3px; }
.zoom { appearance: none; width: 120px; height: 18px; margin: 0; background: linear-gradient(#2e2e2e, #2e2e2e) center / 100% 1px no-repeat; }
.zoom::-webkit-slider-thumb { appearance: none; width: 8px; height: 13px; background: #c4c4c4; border: 1px solid #666; border-radius: 1px 1px 4px 4px; }

/* Pointer highlight */
.halo { position: absolute; right: 212px; bottom: 2px; width: 80px; height: 80px; border-radius: 50%; background: #ffff00; mix-blend-mode: multiply; }
.pointer { position: absolute; right: 240px; bottom: 23px; width: 12px; height: 18px; }
```
